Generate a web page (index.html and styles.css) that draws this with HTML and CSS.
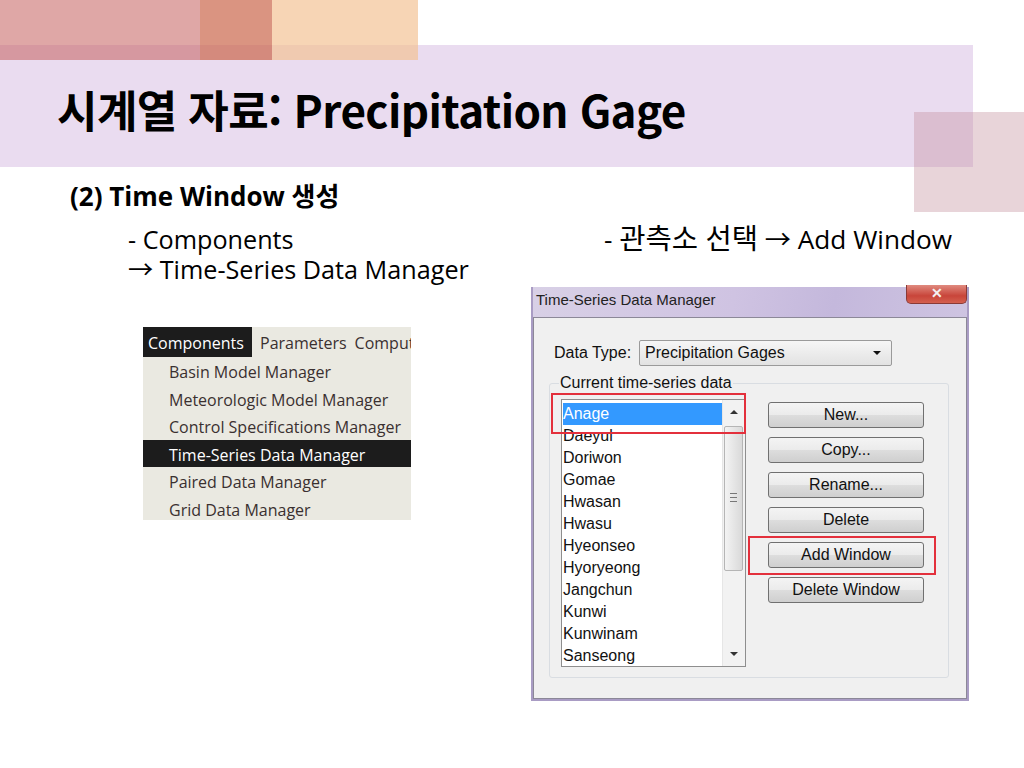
FILE: index.html
```html
<!DOCTYPE html>
<html lang="ko">

<head>
    <meta charset="UTF-8">
    <meta name="viewport" content="width=device-width, initial-scale=1.0">
    <title>시계열 자료: Precipitation Gage</title>
    <link rel="stylesheet" href="styles.css">
</head>

<body>
    <div class="slide">
        <div class="deco deco-a"></div>
        <div class="deco deco-b"></div>
        <div class="deco deco-c"></div>
        <div class="deco deco-d"></div>

        <div class="header">
            <h1>시계열 자료: Precipitation Gage</h1>
        </div>

        <h2 class="subtitle">(2) Time Window 생성</h2>

        <div class="content">
            <div class="col-left">
                <p class="bullet">- Components<br>→ Time-Series Data Manager</p>

                <div class="menu">
                    <div class="menu-bar">
                        <span class="menu-top active">Components</span>
                        <span class="menu-top">Parameters</span>
                        <span class="menu-top">Compute</span>
                    </div>
                    <ul class="menu-list">
                        <li>Basin Model Manager</li>
                        <li>Meteorologic Model Manager</li>
                        <li>Control Specifications Manager</li>
                        <li class="active">Time-Series Data Manager</li>
                        <li>Paired Data Manager</li>
                        <li>Grid Data Manager</li>
                    </ul>
                </div>
            </div>

            <div class="col-right">
                <p class="bullet bullet-right">- <span class="ko">관측소 선택</span> → Add Window</p>

                <div class="dialog">
                    <div class="titlebar">
                        <span class="title-text">Time-Series Data Manager</span>
                        <span class="close-btn">✕</span>
                    </div>
                    <div class="dialog-body">
                        <div class="type-row">
                            <label for="dataType">Data Type:</label>
                            <div class="combo" id="dataType">
                                <span>Precipitation Gages</span>
                                <span class="combo-arrow"></span>
                            </div>
                        </div>

                        <fieldset class="group">
                            <legend>Current time-series data</legend>
                            <div class="group-inner">
                                <div class="listbox">
                                    <ul class="items">
                                        <li class="selected">Anage</li>
                                        <li>Daeyul</li>
                                        <li>Doriwon</li>
                                        <li>Gomae</li>
                                        <li>Hwasan</li>
                                        <li>Hwasu</li>
                                        <li>Hyeonseo</li>
                                        <li>Hyoryeong</li>
                                        <li>Jangchun</li>
                                        <li>Kunwi</li>
                                        <li>Kunwinam</li>
                                        <li>Sanseong</li>
                                    </ul>
                                    <div class="scrollbar">
                                        <span class="arrow-up"></span>
                                        <div class="thumb"><span class="grip"></span></div>
                                        <span class="arrow-down"></span>
                                    </div>
                                    <div class="mark mark-list"></div>
                                </div>

                                <div class="buttons">
                                    <button type="button">New...</button>
                                    <button type="button">Copy...</button>
                                    <button type="button">Rename...</button>
                                    <button type="button">Delete</button>
                                    <button type="button" class="marked">Add Window</button>
                                    <button type="button">Delete Window</button>
                                </div>
                            </div>
                        </fieldset>
                    </div>
                </div>
            </div>
        </div>
    </div>
</body>

</html>
```

FILE: styles.css
```css
body {
    margin: 0;
    background: #ffffff;
    font-family: "Open Sans", "Noto Sans CJK KR", sans-serif;
    color: #111;
}

.slide {
    position: relative;
    width: 1024px;
    height: 768px;
    overflow: hidden;
}

/* decoration blocks */
.deco {
    position: absolute;
    z-index: 2;
}

.deco-a {
    left: 0;
    top: 0;
    width: 200px;
    height: 60px;
    background: rgba(199, 100, 99, 0.57);
}

.deco-b {
    left: 200px;
    top: 0;
    width: 72px;
    height: 60px;
    background: rgba(202, 102, 76, 0.7);
}

.deco-c {
    left: 272px;
    top: 0;
    width: 146px;
    height: 60px;
    background: rgba(243, 192, 145, 0.67);
}

.deco-d {
    left: 914px;
    top: 112px;
    width: 110px;
    height: 100px;
    background: rgba(195, 142, 155, 0.38);
}

.header {
    margin-top: 45px;
    width: 973px;
    height: 122px;
    background: #eadcf0;
    display: flex;
    align-items: center;
}

.header h1 {
    margin: 0 0 0 57px;
    font-family: "Noto Sans CJK KR", sans-serif;
    font-weight: 700;
    font-size: 44px;
    letter-spacing: -0.6px;
    color: #000;
    position: relative;
    top: 3px;
}

.subtitle {
    margin: 14px 0 0 70px;
    font-size: 26px;
    line-height: 30px;
    font-weight: 700;
    color: #000;
}

.content {
    display: flex;
}

.col-left {
    margin-left: 128px;
    width: 403px;
}

.col-right {
    width: 440px;
}

.bullet {
    margin: 13px 0 0;
    font-size: 25.2px;
    line-height: 30px;
    color: #000;
}

.bullet-right {
    padding-left: 73px;
    font-size: 26.2px;
    white-space: nowrap;
}

.bullet .ko {
    font-size: 1.09em;
    line-height: 1;
}

/* menu screenshot */
.menu {
    margin: 43px 0 0 15px;
    width: 268px;
    height: 193px;
    overflow: hidden;
    background: #eae9e1;
    font-family: "Open Sans", sans-serif;
    font-size: 16px;
    color: #3a3030;
}

.menu-bar {
    height: 30px;
    display: flex;
    white-space: nowrap;
}

.menu-top {
    flex-shrink: 0;
    padding: 3px 0 0 8px;
    line-height: 27px;
}

.menu-top.active {
    background: #1c1c1c;
    color: #fff;
    padding-left: 5px;
    width: 104px;
}

.menu-list {
    list-style: none;
    margin: 0;
    padding: 0;
}

.menu-list li {
    box-sizing: border-box;
    height: 27.5px;
    padding: 3px 0 0 26px;
    line-height: 24.5px;
    white-space: nowrap;
}

.menu-list li.active {
    background: #1c1c1c;
    color: #fff;
}

/* dialog */
.dialog {
    margin-top: 33px;
    width: 434px;
    height: 412px;
    border: 2px solid #a99cc4;
    border-top: none;
    background: linear-gradient(100deg, #d8d0e6 0%, #cfc3e2 40%, #c4b8dc 60%, #d3cae4 100%);
    font-family: "Liberation Sans", sans-serif;
    color: #111;
}

.titlebar {
    position: relative;
    height: 30px;
}

.title-text {
    display: block;
    padding: 4px 0 0 3px;
    font-size: 15px;
    color: #222;
}

.close-btn {
    position: absolute;
    right: 0;
    top: -2px;
    width: 59px;
    height: 18px;
    border: 1px solid #8a3a36;
    border-top: none;
    border-radius: 0 0 5px 5px;
    background: linear-gradient(#e08a7f, #c8453a 60%, #d4604f);
    color: #f4f0f0;
    font-size: 14px;
    font-weight: 700;
    line-height: 16px;
    text-align: center;
}

.dialog-body {
    height: 382px;
    box-sizing: border-box;
    border: 1px solid #8c8898;
    background: #f0f0f0;
    padding: 22px 17px 0 15px;
}

.type-row {
    display: flex;
    align-items: center;
    gap: 8px;
    padding-left: 5px;
    font-size: 16px;
}

.combo {
    width: 253px;
    height: 26px;
    box-sizing: border-box;
    border: 1px solid #9a9a9a;
    border-radius: 2px;
    background: linear-gradient(#f6f6f6, #e2e2e2);
    display: flex;
    align-items: center;
    justify-content: space-between;
    padding: 0 10px 0 5px;
}

.combo-arrow {
    width: 0;
    height: 0;
    border-left: 4px solid transparent;
    border-right: 4px solid transparent;
    border-top: 4px solid #111;
}

.group {
    margin: 9px 0 0;
    padding: 8px 12px 9px 11px;
    border: 1px solid #d9dde2;
    border-radius: 3px;
    height: 303px;
    box-sizing: border-box;
}

.group legend {
    padding: 0 1px;
    margin-left: -2px;
    font-size: 16px;
    line-height: 16px;
}

.group-inner {
    display: flex;
    gap: 22px;
}

.listbox {
    position: relative;
    width: 185px;
    height: 268px;
    box-sizing: border-box;
    border: 1px solid #8e8e8e;
    background: #fff;
    display: flex;
}

.items {
    list-style: none;
    margin: 0;
    padding: 3px 0 0 1px;
    flex: 1;
    overflow: hidden;
    font-size: 16px;
}

.items li {
    height: 22px;
    line-height: 22px;
}

.items li.selected {
    background: #3399ff;
    color: #fff;
}

.scrollbar {
    position: relative;
    width: 22px;
    border-left: 1px solid #e6e6e6;
    background: #f2f2f2;
}

.arrow-up,
.arrow-down {
    position: absolute;
    left: 7px;
    width: 0;
    height: 0;
    border-left: 4px solid transparent;
    border-right: 4px solid transparent;
}

.arrow-up {
    top: 10px;
    border-bottom: 4px solid #333;
}

.arrow-down {
    bottom: 10px;
    border-top: 4px solid #333;
}

.thumb {
    position: absolute;
    left: 1px;
    top: 26px;
    width: 17px;
    height: 143px;
    border: 1px solid #b5b5b5;
    border-radius: 2px;
    background: linear-gradient(90deg, #f3f3f3, #d9d9d9);
}

.grip {
    position: absolute;
    left: 5px;
    top: 66px;
    width: 7px;
    height: 7px;
    border-top: 1px solid #777;
    border-bottom: 1px solid #777;
}

.grip::after {
    content: "";
    position: absolute;
    left: 0;
    top: 3px;
    width: 7px;
    border-top: 1px solid #777;
}

.mark {
    position: absolute;
    border: 2px solid #e3303c;
}

.mark-list {
    left: -11px;
    top: -7px;
    width: 191px;
    height: 37px;
}

.buttons {
    display: flex;
    flex-direction: column;
    gap: 9px;
    padding-top: 3px;
}

.buttons button {
    width: 156px;
    height: 26px;
    border: 1px solid #707070;
    border-radius: 3px;
    background: linear-gradient(#f4f4f4 0%, #ebebeb 50%, #dddddd 51%, #cfcfcf 100%);
    font-family: "Liberation Sans", sans-serif;
    font-size: 16px;
    color: #111;
    padding: 0;
}

.buttons button.marked {
    position: relative;
}

.buttons button.marked::after {
    content: "";
    position: absolute;
    left: -21px;
    top: -7px;
    width: 184px;
    height: 35px;
    border: 2px solid #e3303c;
}
```
